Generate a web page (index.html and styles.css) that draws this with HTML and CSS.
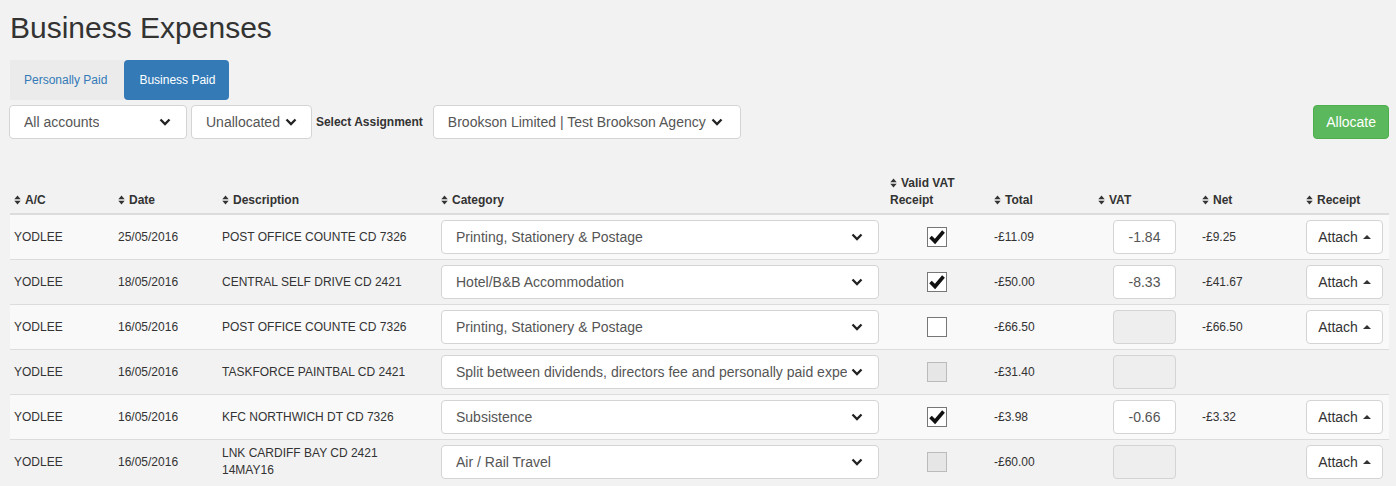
FILE: index.html
```html
<!DOCTYPE html>
<html lang="en">
<head>
    <meta charset="UTF-8">
    <meta name="viewport" content="width=device-width, initial-scale=1.0">
    <title>Business Expenses</title>
    <link rel="stylesheet" href="styles.css">
</head>
<body>
    <div class="page">
        <h1 class="page-title">Business Expenses</h1>

        <div class="tabs">
            <a class="tab">Personally Paid</a>
            <a class="tab active">Business Paid</a>
        </div>

        <div class="filters">
            <div class="select select-accounts">
                <span class="select-text">All accounts</span>
                <svg class="chevron" width="12" height="8" viewBox="0 0 12 8"><polyline points="1.5,1.5 6,6 10.5,1.5"/></svg>
            </div>
            <div class="select select-inline">
                <span class="select-text">Unallocated</span>
                <svg class="chevron" width="12" height="8" viewBox="0 0 12 8"><polyline points="1.5,1.5 6,6 10.5,1.5"/></svg>
            </div>
            <label class="filter-label">Select Assignment</label>
            <div class="select select-inline select-assignment">
                <span class="select-text">Brookson Limited | Test Brookson Agency</span>
                <svg class="chevron" width="12" height="8" viewBox="0 0 12 8"><polyline points="1.5,1.5 6,6 10.5,1.5"/></svg>
            </div>
            <button class="btn-allocate" type="button">Allocate</button>
        </div>

        <table class="expenses">
            <thead>
                <tr>
                    <th class="col-ac"><span class="sort"></span>A/C</th>
                    <th class="col-date"><span class="sort"></span>Date</th>
                    <th class="col-desc"><span class="sort"></span>Description</th>
                    <th class="col-cat"><span class="sort"></span>Category</th>
                    <th class="col-valid"><span class="sort"></span>Valid VAT Receipt</th>
                    <th class="col-total"><span class="sort"></span>Total</th>
                    <th class="col-vat"><span class="sort"></span>VAT</th>
                    <th class="col-net"><span class="sort"></span>Net</th>
                    <th class="col-receipt"><span class="sort"></span>Receipt</th>
                </tr>
            </thead>
            <tbody id="rows"></tbody>
        </table>
    </div>

    <script>
        // rows of bank transactions waiting for a category
        var expenses = [
            { ac: "YODLEE", date: "25/05/2016", desc: "POST OFFICE COUNTE CD 7326", cat: "Printing, Stationery & Postage", valid: "checked", total: "-£11.09", vat: "-1.84", net: "-£9.25", attach: true },
            { ac: "YODLEE", date: "18/05/2016", desc: "CENTRAL SELF DRIVE CD 2421", cat: "Hotel/B&B Accommodation", valid: "checked", total: "-£50.00", vat: "-8.33", net: "-£41.67", attach: true },
            { ac: "YODLEE", date: "16/05/2016", desc: "POST OFFICE COUNTE CD 7326", cat: "Printing, Stationery & Postage", valid: "empty", total: "-£66.50", vat: null, net: "-£66.50", attach: true },
            { ac: "YODLEE", date: "16/05/2016", desc: "TASKFORCE PAINTBAL CD 2421", cat: "Split between dividends, directors fee and personally paid expenses", valid: "disabled", total: "-£31.40", vat: null, net: "", attach: false },
            { ac: "YODLEE", date: "16/05/2016", desc: "KFC NORTHWICH DT CD 7326", cat: "Subsistence", valid: "checked", total: "-£3.98", vat: "-0.66", net: "-£3.32", attach: true },
            { ac: "YODLEE", date: "16/05/2016", desc: "LNK CARDIFF BAY CD 2421 14MAY16", cat: "Air / Rail Travel", valid: "disabled", total: "-£60.00", vat: null, net: "", attach: true }
        ];

        var chevron = '<svg class="chevron" width="12" height="8" viewBox="0 0 12 8"><polyline points="1.5,1.5 6,6 10.5,1.5"/></svg>';
        var tick = '<svg width="18" height="18" viewBox="0 0 18 18"><polyline points="2.5,9 7,13.5 15.5,3.5"/></svg>';
        var sortIcon = '<svg width="7" height="10" viewBox="0 0 7 10"><path d="M0.3 4.3 L3.5 0.6 L6.7 4.3Z M0.3 5.7 L3.5 9.4 L6.7 5.7Z"/></svg>';

        document.querySelectorAll(".sort").forEach(function(el) {
            el.innerHTML = sortIcon;
        });

        var tbody = document.getElementById("rows");
        expenses.forEach(function(row) {
            var tr = document.createElement("tr");
            var box = '<span class="check ' + row.valid + '">' + (row.valid === "checked" ? tick : "") + '</span>';
            var vat = row.vat ? '<span class="vat-input">' + row.vat + '</span>' : '<span class="vat-input disabled"></span>';
            var attach = row.attach ? '<button class="btn-attach" type="button">Attach <span class="caret"></span></button>' : "";

            tr.innerHTML =
                '<td>' + row.ac + '</td>' +
                '<td>' + row.date + '</td>' +
                '<td class="cell-desc">' + row.desc + '</td>' +
                '<td><div class="select select-cat"><span class="select-text">' + row.cat.replace("&", "&amp;") + '</span>' + chevron + '</div></td>' +
                '<td class="cell-valid">' + box + '</td>' +
                '<td>' + row.total + '</td>' +
                '<td>' + vat + '</td>' +
                '<td>' + row.net + '</td>' +
                '<td>' + attach + '</td>';
            tbody.appendChild(tr);
        });
    </script>
</body>
</html>
```

FILE: styles.css
```css
html, body {
    margin: 0;
    padding: 0;
    overflow: hidden;
}

body {
    font-family: "Liberation Sans", Arial, sans-serif;
    font-size: 12px;
    line-height: 17px;
    color: #333;
    background-color: #f2f2f2;
}

.page {
    padding: 0 7px 0 10px;
}

/* Title */
.page-title {
    margin: 11px 0 16px 0;
    font-size: 30px;
    line-height: 33px;
    font-weight: normal;
    color: #333;
}

/* Tabs */
.tabs {
    display: flex;
    height: 40px;
}

.tab {
    display: flex;
    align-items: center;
    padding: 0 17px 0 14px;
    color: #337ab7;
    background-color: #ebebeb;
    cursor: pointer;
}

.tab.active {
    padding: 0 14px 0 15px;
    color: #fff;
    background-color: #337ab7;
    border-radius: 4px;
}

/* Filter row */
.filters {
    display: flex;
    align-items: center;
    margin-top: 5px;
    margin-left: -1px;
}

.select {
    display: flex;
    align-items: center;
    box-sizing: border-box;
    height: 34px;
    padding: 0 14px;
    font-size: 14px;
    color: #555;
    background-color: #fff;
    border: 1px solid #d4d4d4;
    border-radius: 4px;
}

.select-text {
    white-space: nowrap;
    overflow: hidden;
}

.chevron {
    flex: none;
    fill: none;
    stroke: #222;
    stroke-width: 2.3;
}

.select-accounts {
    width: 178px;
    justify-content: space-between;
    padding-right: 15px;
}

.select-inline {
    margin-left: 4px;
    padding-right: 14px;
}

.select-inline .chevron {
    margin-left: 5px;
}

.select-assignment {
    padding-right: 17px;
}

.filter-label {
    margin: 0 6px 0 4px;
    font-weight: bold;
}

.btn-allocate {
    margin-left: auto;
    height: 34px;
    padding: 0 12px;
    font-family: inherit;
    font-size: 14px;
    color: #fff;
    background-color: #5cb85c;
    border: 1px solid #4cae4c;
    border-radius: 4px;
}

/* Table */
.expenses {
    width: 1379px;
    margin-top: 31px;
    border-collapse: collapse;
    table-layout: fixed;
}

.expenses th {
    padding: 5px 4px 4px 4px;
    text-align: left;
    vertical-align: bottom;
    font-weight: bold;
    border-bottom: 2px solid #dcdcdc;
}

.expenses td {
    padding: 5px 4px;
    vertical-align: middle;
    border-top: 1px solid #dcdcdc;
}

.expenses tbody tr:nth-child(odd) {
    background-color: #f9f9f9;
}

.sort svg {
    fill: #333;
    margin-right: 4px;
    vertical-align: -1px;
}

.col-ac, .col-date, .col-valid, .col-total, .col-vat, .col-net {
    width: 96px;
}

.col-desc {
    width: 211px;
}

.col-cat {
    width: 441px;
}

.col-receipt {
    width: 79px;
}

.expenses td.cell-desc {
    padding-right: 24px;
}

.select-cat {
    width: 438px;
    justify-content: space-between;
    padding-right: 15px;
}

.select-cat .chevron {
    margin-left: 4px;
}

/* Valid VAT receipt checkbox */
.cell-valid {
    text-align: center;
}

.check {
    display: inline-block;
    box-sizing: border-box;
    width: 20px;
    height: 20px;
    margin-left: -3px;
    vertical-align: middle;
    border: 1px solid #777;
    background-color: #fff;
}

.check svg {
    display: block;
    fill: none;
    stroke: #111;
    stroke-width: 3.6;
}

.check.disabled {
    background-color: #e6e6e6;
    border-color: #bbb;
}

/* VAT input */
.vat-input {
    display: block;
    box-sizing: border-box;
    width: 63px;
    height: 34px;
    margin-left: 15px;
    font-size: 14px;
    line-height: 32px;
    text-align: center;
    color: #555;
    background-color: #fff;
    border: 1px solid #d4d4d4;
    border-radius: 4px;
}

.vat-input.disabled {
    background-color: #eee;
}

/* Attach button */
.btn-attach {
    height: 34px;
    width: 77px;
    padding: 0;
    font-family: inherit;
    font-size: 14px;
    color: #333;
    background-color: #fff;
    border: 1px solid #d4d4d4;
    border-radius: 4px;
}

.caret {
    display: inline-block;
    width: 0;
    height: 0;
    margin-left: 1px;
    vertical-align: 3px;
    border-left: 4px solid transparent;
    border-right: 4px solid transparent;
    border-bottom: 4px solid #333;
}
```
